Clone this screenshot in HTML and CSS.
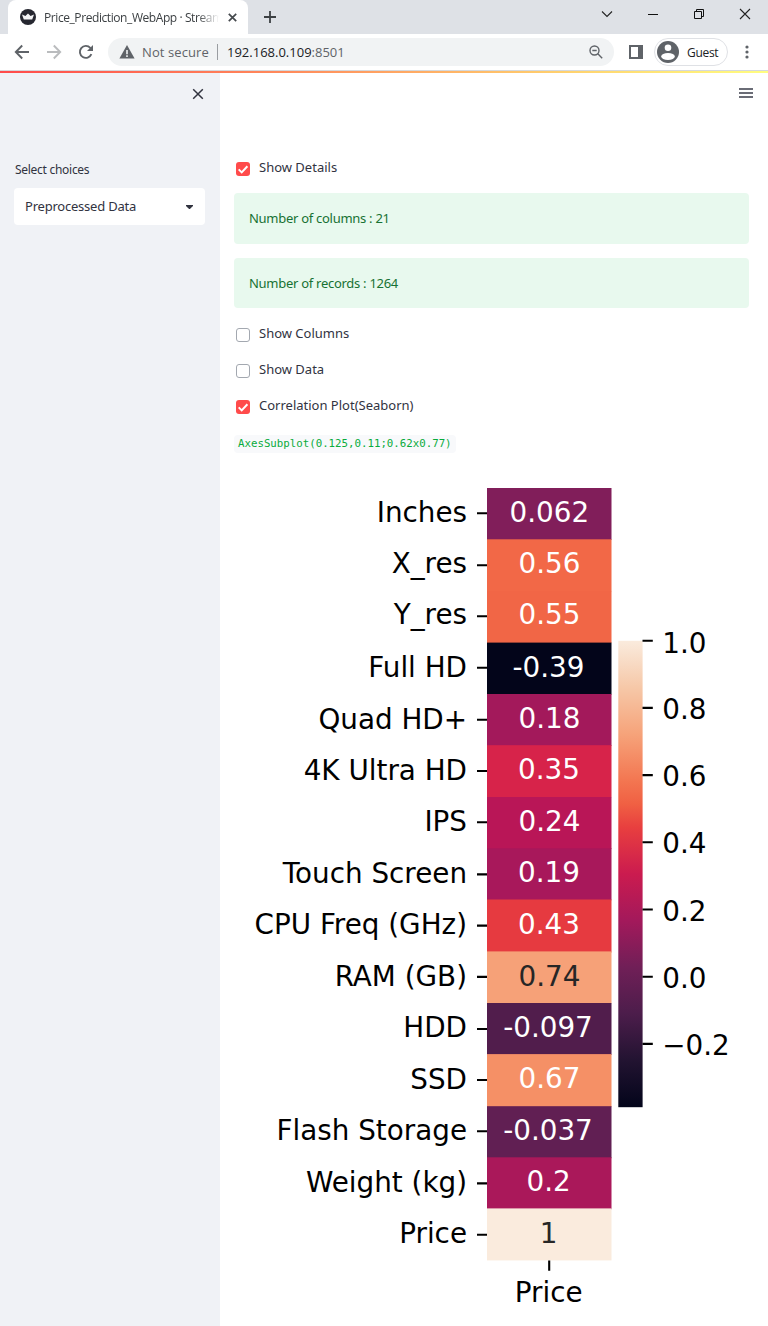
FILE: index.html
```html
<!DOCTYPE html>
<html lang="en">
<head>
<meta charset="utf-8">
<title>Price_Prediction_WebApp · Streamlit</title>
<link rel="stylesheet" href="styles.css">
</head>
<body>
<header class="browser">
  <div class="tabstrip">
    <div class="tab">
      <svg class="favicon" width="16" height="16" viewBox="0 0 16 16"><circle cx="8" cy="8" r="8" fill="#262730"/><path d="M2 5.4 5.4 7 8 4.6 10.6 7 14 5.4l-1.8 5.2H3.8z" fill="#f4f4f6"/></svg>
      <span class="tab-title">Price_Prediction_WebApp · Stream</span>
      <svg class="tab-close" width="9" height="9" viewBox="0 0 9 9"><path d="m.8.8 7.4 7.4m0-7.4L.8 8.2" stroke="#45494d" stroke-width="1.7"/></svg>
    </div>
    <svg class="new-tab" width="12" height="12" viewBox="0 0 12 12"><path d="M6 0v12M0 6h12" stroke="#3c4043" stroke-width="1.8"/></svg>
    <div class="window-buttons">
      <svg width="12" height="12" viewBox="0 0 12 12"><path d="m1 3.5 5 5 5-5" fill="none" stroke="#222" stroke-width="1.1"/></svg>
      <svg width="12" height="12" viewBox="0 0 12 12"><path d="M1 6.5h10" stroke="#111"/></svg>
      <svg width="12" height="12" viewBox="0 0 12 12"><path d="M1.5 3.5h7v7h-7zM3.5 3.5v-2h7v7h-2" fill="none" stroke="#111"/></svg>
      <svg width="12" height="12" viewBox="0 0 12 12"><path d="m1 1 10 10M11 1 1 11" stroke="#222" stroke-width="1.1"/></svg>
    </div>
  </div>
  <div class="toolbar">
    <svg class="nav" width="16" height="16" viewBox="0 0 16 16"><path d="M8.2 1.5 1.8 8l6.4 6.5M2 8h13" fill="none" stroke="#5f6368" stroke-width="1.9"/></svg>
    <svg class="nav" width="16" height="16" viewBox="0 0 16 16"><path d="M7.8 1.5 14.2 8l-6.4 6.5M14 8H1" fill="none" stroke="#babcbe" stroke-width="1.9"/></svg>
    <svg class="nav" width="16" height="16" viewBox="0 0 16 16"><path d="M13.4 10.2A6 6 0 1 1 12.3 3.8L14 5.5" fill="none" stroke="#5f6368" stroke-width="1.9"/><path d="M15 1v6H9z" fill="#5f6368"/></svg>
    <div class="omnibox">
      <svg width="16" height="14" viewBox="0 0 16 14"><path d="M8 0 15.6 13.5H.4z" fill="#5f6368"/><path d="M8 5v4.2M8 10.2v1.7" stroke="#f1f3f4" stroke-width="1.6"/></svg>
      <span class="security">Not secure</span>
      <span class="divider"></span>
      <span class="url">192.168.0.109<span class="port">:8501</span></span>
      <svg class="magnifier" width="14" height="14" viewBox="0 0 14 14"><circle cx="5.5" cy="5.5" r="4.5" fill="none" stroke="#5f6368" stroke-width="1.4"/><path d="M3.3 5.5h4.4M8.8 8.8l4.4 4.4" stroke="#5f6368" stroke-width="1.4"/></svg>
    </div>
    <svg class="panel" width="14" height="14" viewBox="0 0 14 14"><path d="M0 0h14v14H0zM2 2v10h7V2z" fill="#5f6368" fill-rule="evenodd"/></svg>
    <div class="profile">
      <svg width="22" height="22" viewBox="0 0 22 22"><circle cx="11" cy="11" r="11" fill="#5f6368"/><circle cx="11" cy="6.8" r="3.3" fill="#fff"/><ellipse cx="11" cy="15.5" rx="6.8" ry="3.4" fill="#fff"/></svg>
      <span>Guest</span>
    </div>
    <svg class="more" width="4" height="14" viewBox="0 0 4 14"><g fill="#5f6368"><circle cx="2" cy="2" r="1.6"/><circle cx="2" cy="7" r="1.6"/><circle cx="2" cy="12" r="1.6"/></g></svg>
  </div>
</header>
<div class="rainbow"></div>
<div class="app">
  <aside class="sidebar">
    <svg class="sidebar-close" width="12" height="12" viewBox="0 0 12 12"><path d="m1.2 1.2 9.6 9.6m0-9.6-9.6 9.6" stroke="#31333f" stroke-width="1.5"/></svg>
    <label class="select-label">Select choices</label>
    <div class="select"><span>Preprocessed Data</span><svg width="7" height="4" viewBox="0 0 7 4"><path d="M0 0h7v1L3.9 4h-.8L0 1z" fill="#31333f"/></svg></div>
  </aside>
  <main class="main">
    <svg class="menu" width="14" height="10" viewBox="0 0 14 10"><path d="M0 1h14M0 5h14M0 9h14" stroke="#3a3c49" stroke-width="1.7"/></svg>
    <div class="check first"><span class="box on"><svg width="14" height="14" viewBox="0 0 14 14"><path d="m2.7 7.4 3 3 5.7-6.2" fill="none" stroke="#fff" stroke-width="2"/></svg></span><span>Show Details</span></div>
    <div class="alert"><span>Number of columns : 21</span></div>
    <div class="alert"><span>Number of records : 1264</span></div>
    <div class="check after-alert"><span class="box"></span><span>Show Columns</span></div>
    <div class="check"><span class="box"></span><span>Show Data</span></div>
    <div class="check"><span class="box on"><svg width="14" height="14" viewBox="0 0 14 14"><path d="m2.7 7.4 3 3 5.7-6.2" fill="none" stroke="#fff" stroke-width="2"/></svg></span><span>Correlation Plot(Seaborn)</span></div>
    <code class="code">AxesSubplot(0.125,0.11;0.62x0.77)</code>
    <svg class="chart" width="548" height="850" viewBox="220 476 548 850">
      <defs><linearGradient id="rocket" x1="0" y1="0" x2="0" y2="1">
        <stop offset="0" stop-color="#faebdd"/><stop offset=".1" stop-color="#f6c8a8"/><stop offset=".2" stop-color="#f6a37a"/><stop offset=".3" stop-color="#f37651"/><stop offset=".35" stop-color="#f06043"/><stop offset=".4" stop-color="#e83f3f"/><stop offset=".5" stop-color="#cb1b4f"/><stop offset=".6" stop-color="#a3195b"/><stop offset=".7" stop-color="#701f57"/><stop offset=".8" stop-color="#4c1d4b"/><stop offset=".9" stop-color="#221331"/><stop offset="1" stop-color="#03051a"/>
      </linearGradient></defs>
      <g class="cells">
        <rect x="487" y="488" width="124.5" height="52" fill="#811e5a"/>
        <rect x="487" y="539.3" width="124.5" height="52" fill="#f26847"/>
        <rect x="487" y="591" width="124.5" height="52" fill="#f16646"/>
        <rect x="487" y="642.6" width="124.5" height="52" fill="#03051a"/>
        <rect x="487" y="694" width="124.5" height="52" fill="#a3195b"/>
        <rect x="487" y="745.2" width="124.5" height="52" fill="#d7234a"/>
        <rect x="487" y="797" width="124.5" height="52" fill="#b91657"/>
        <rect x="487" y="848.3" width="124.5" height="52" fill="#a8185b"/>
        <rect x="487" y="899.5" width="124.5" height="53" fill="#e63a40"/>
        <rect x="487" y="951.4" width="124.5" height="52" fill="#f6a178"/>
        <rect x="487" y="1003" width="124.5" height="52" fill="#511d4c"/>
        <rect x="487" y="1054.1" width="124.5" height="53" fill="#f59066"/>
        <rect x="487" y="1106.2" width="124.5" height="52" fill="#611f53"/>
        <rect x="487" y="1157.3" width="124.5" height="52" fill="#aa185a"/>
        <rect x="487" y="1208.4" width="124.5" height="52" fill="#faebdd"/>
      </g>
      <rect x="618.3" y="640.8" width="24.3" height="466.4" fill="url(#rocket)"/>
      <path d="M477 513.3h10m-10 52h10m-10 51h10m-10 51.4h10m-10 52h10m-10 51.3h10m-10 51.2h10m-10 52.2h10m-10 51.2h10m-10 51.3h10m-10 52.1h10m-10 51h10m-10 51.3h10m-10 52.1h10m-10 51.3h10M549.2 1260.5v10.3M642.5 640.7h10.3m-10.3 67.2h10.3m-10.3 67.2h10.3m-10.3 67.2h10.3m-10.3 67.2h10.3m-10.3 67.2h10.3m-10.3 67.2h10.3" stroke="#000" stroke-width="2.1" fill="none"/>
      <g class="row-names">
        <text x="467" y="522">Inches</text><text x="467" y="572.5">X_res</text><text x="467" y="623.8">Y_res</text><text x="467" y="676.5">Full HD</text><text x="467" y="728.5">Quad HD+</text><text x="467" y="779.5">4K Ultra HD</text><text x="467" y="831">IPS</text><text x="467" y="882.5">Touch Screen</text><text x="467" y="933.8">CPU Freq (GHz)</text><text x="467" y="985.5">RAM (GB)</text><text x="467" y="1037">HDD</text><text x="467" y="1088.5">SSD</text><text x="467" y="1140">Flash Storage</text><text x="467" y="1191.5">Weight (kg)</text><text x="467" y="1243">Price</text>
      </g>
      <g class="values">
        <text x="549.3" y="521.7">0.062</text><text x="549.5" y="573">0.56</text><text x="549.5" y="624.2">0.55</text><text x="548.5" y="676.5">-0.39</text><text x="549.5" y="727.7">0.18</text><text x="549" y="779">0.35</text><text x="549.5" y="831">0.24</text><text x="549" y="882.2">0.19</text><text x="549" y="933.5">0.43</text><text class="dark" x="549.5" y="985.5">0.74</text><text x="548" y="1036.7">-0.097</text><text x="549.5" y="1088">0.67</text><text x="548" y="1140">-0.037</text><text x="548.7" y="1191.3">0.2</text><text class="dark" x="548.7" y="1242.5">1</text>
      </g>
      <text x="548.7" y="1301.7" text-anchor="middle">Price</text>
      <g><text x="662.3" y="652.5">1.0</text><text x="662.3" y="718.5">0.8</text><text x="662.3" y="785.7">0.6</text><text x="662.3" y="853">0.4</text><text x="662.3" y="920.5">0.2</text><text x="662.3" y="987.5">0.0</text><text x="662.3" y="1054.7">−0.2</text></g>
    </svg>
  </main>
</div>
</body>
</html>
```
FILE: styles.css
```css
* { box-sizing: border-box; }
body { margin: 0; width: 768px; height: 1326px; overflow: hidden; background: #fff; color: #31333f; font-family: "Noto Sans", "Open Sans", sans-serif; font-size: 13px; }
svg { display: block; flex: none; }
span, label { white-space: nowrap; }
.browser { height: 71px; font-family: "Open Sans", sans-serif; border-bottom: 1px solid #d5d8dc; }
.tabstrip { height: 34px; background: #dee1e6; display: flex; align-items: flex-start; padding-left: 8px; }
.tab { width: 240px; height: 34px; background: #fff; border-radius: 8px 8px 0 0; display: flex; align-items: center; padding-left: 12px; }
.tab-title { width: 175px; margin-left: 8px; overflow: hidden; font-size: 12px; letter-spacing: -.42px; color: #3c4043; -webkit-mask-image: linear-gradient(90deg, #000 88%, transparent); mask-image: linear-gradient(90deg, #000 88%, transparent); }
.tab-close { margin-left: 9px; }
.new-tab { margin: 11px 0 0 16px; }
.window-buttons { display: flex; gap: 34px; margin: 8px 17px 0 auto; }
.toolbar { height: 36px; display: flex; align-items: center; padding-left: 14px; gap: 16px; }
.toolbar .omnibox { width: 506px; height: 28px; border-radius: 14px; background: #f1f3f4; display: flex; align-items: center; padding: 0 11px; margin-left: -2px; }
.security { color: #5f6368; width: 67px; margin-left: 7px; letter-spacing: .1px; }
.divider { width: 1px; height: 16px; background: #9a9da1; margin: 0 9px 0 8px; }
.url { color: #202124; }
.port { color: #5f6368; }
.magnifier { margin-left: auto; }
.panel { margin-left: -1px; }
.profile { width: 74px; height: 28px; margin-left: -5px; border: 1px solid #dfe1e5; border-radius: 14px; display: flex; align-items: center; padding-left: 2px; gap: 8px; font-size: 12px; letter-spacing: -.3px; color: #202124; }
.more { margin-left: 1px; }
.rainbow { height: 2px; background: linear-gradient(90deg, #ff4b4b, #ff8c5c 38%, #ffd06e 73%, #fffd80); }
.app { display: flex; height: 1253px; }
.sidebar { width: 220px; background: #f0f2f6; padding: 15px 15px 0 14px; }
.sidebar-close { margin-left: 178px; }
.select-label { display: block; margin-top: 60px; height: 20px; line-height: 20px; font-size: 12px; letter-spacing: -.28px; padding-left: 1px; }
.select { margin-top: 8px; height: 37px; border-radius: 4px; background: #fff; display: flex; align-items: center; justify-content: space-between; padding: 0 12px 0 11px; }
.select span { letter-spacing: -.22px; padding-bottom: 2px; }
.main { width: 548px; padding: 15px 0 0 14px; display: flex; flex-direction: column; }
.menu { margin-left: 505px; }
.check { height: 22px; margin-top: 14px; padding-left: 2px; display: flex; gap: 9px; line-height: 20px; }
.check.first { margin-top: 59px; }
.check.after-alert { margin-top: 15px; }
.box { width: 14px; height: 14px; margin-top: 5px; border: 1px solid #a3a8b0; border-radius: 3px; }
.box.on { border: 0; background: #ff4b4b; }
.after-alert .box, .after-alert ~ .check .box { margin-top: 4.5px; }
.alert { width: 515px; height: 51px; border-radius: 4px; background: #e8f9ee; color: #177233; margin-top: 14px; padding: 0 15px; display: flex; align-items: center; letter-spacing: -.28px; }
.code { align-self: flex-start; height: 18px; margin-top: 18px; padding: 0 4px; border-radius: 4px; background: #f8f9fb; color: #09ab3b; font: 10.75px/18px "DejaVu Sans Mono", monospace; }
.chart { margin: 23px 0 0 -14px; font-family: "DejaVu Sans", sans-serif; font-size: 27.8px; }
.row-names { text-anchor: end; }
.values { text-anchor: middle; fill: #fff; }
.dark { fill: #262626; }
```
